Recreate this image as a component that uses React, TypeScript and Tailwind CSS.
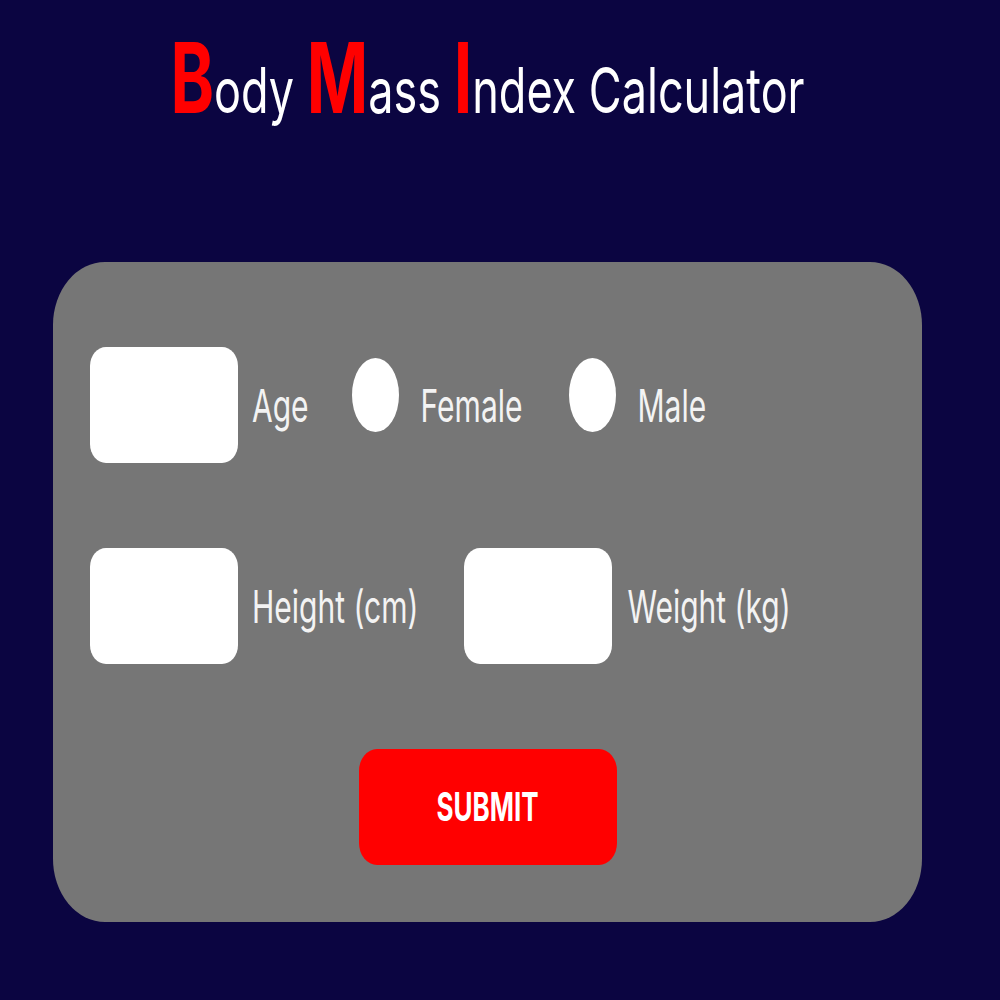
import React from 'react';

const Label: React.FC<{ text: string; className?: string }> = ({ text, className }) => (
  <span className={`inline-block scale-y-[1.5] text-[30px] leading-none text-[#f3f3f3] ${className ?? ''}`}>
    {text}
  </span>
);

const Initial: React.FC<{ letter: string }> = ({ letter }) => (
  <span className="inline-block origin-[50%_86%] scale-y-[1.05] text-[66px] font-bold leading-none text-[#ff0000]">
    {letter}
  </span>
);

const Field: React.FC = () => (
  <div className="w-[148px] h-[116px] shrink-0 rounded-[16px/19px] bg-white" />
);

const Radio: React.FC<{ className?: string }> = ({ className }) => (
  <div className={`w-[47px] h-[74px] shrink-0 self-start mt-[11px] rounded-[50%] bg-white ${className ?? ''}`} />
);

const App: React.FC = () => {
  return (
    <div className="min-h-screen overflow-hidden bg-[#0b0541] font-['Inter',sans-serif]">
      <div className="w-[975px] flex flex-col items-center">
        {/* Title */}
        <h1 className="h-[140px] pt-[60px] flex items-baseline whitespace-nowrap leading-none">
          <span className="inline-block origin-bottom scale-y-[1.4] text-[45px] text-white">
            <Initial letter="B" />
            ody{' '}
            <Initial letter="M" />
            ass{' '}
            <Initial letter="I" />
            ndex Calculator
          </span>
        </h1>

        {/* Form card */}
        <div className="mt-[122px] w-[869px] h-[660px] flex flex-col rounded-[52px/63px] bg-[#767676]">
          <div className="mt-[85px] pl-[37px] h-[116px] flex items-center">
            <Field />
            <Label text="Age" className="ml-[14px]" />
            <Radio className="ml-[43px]" />
            <Label text="Female" className="ml-[22px]" />
            <Radio className="ml-[46px]" />
            <Label text="Male" className="ml-[22px]" />
          </div>

          <div className="mt-[85px] pl-[37px] h-[116px] flex items-center">
            <Field />
            <Label text="Height (cm)" className="ml-[14px]" />
            <div className="ml-[46px]">
              <Field />
            </div>
            <Label text="Weight (kg)" className="ml-[15px]" />
          </div>

          <button className="mt-[85px] self-center w-[258px] h-[116px] rounded-[18px/22px] bg-[#ff0000] flex items-center justify-center">
            <span className="inline-block scale-y-[1.55] text-[26px] font-bold leading-none text-white">
              SUBMIT
            </span>
          </button>
        </div>
      </div>
    </div>
  );
};

export default App;
